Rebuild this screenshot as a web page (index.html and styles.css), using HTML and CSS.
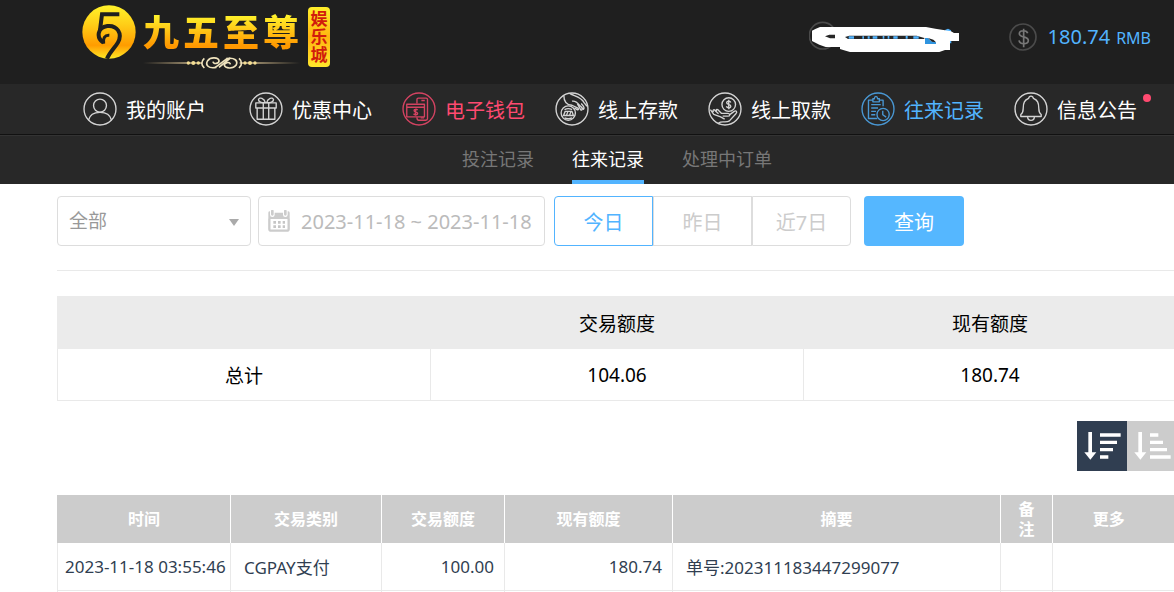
FILE: index.html
```
<!DOCTYPE html>
<html lang="zh-CN">

<head>
    <meta charset="UTF-8">
    <meta name="viewport" content="width=device-width, initial-scale=1.0">
    <title>往来记录</title>
    <link rel="stylesheet" href="styles.css">
</head>

<body>
    <header class="header">
        <a class="logo" href="#">
            <svg class="logo-mark" viewBox="0 0 162 162" aria-hidden="true">
                <defs>
                    <linearGradient id="gold" x1="0" y1="0" x2="0" y2="1">
                        <stop offset="0" stop-color="#fff22a" />
                        <stop offset="0.35" stop-color="#ffcf18" />
                        <stop offset="0.75" stop-color="#ff9c00" />
                        <stop offset="1" stop-color="#ffe926" />
                    </linearGradient>
                </defs>
                <circle cx="81" cy="81" r="80" fill="url(#gold)" />
                <path d="M112 28H60L54 76" fill="none" stroke="#1f1f1f" stroke-width="12" />
                <path d="M64 113C42 98 46 67 76 63C106 60 122 86 108 112C99 128 84 140 75 161" fill="none" stroke="#1f1f1f" stroke-width="12" />
                <path d="M65 116C62 100 68 90 82 91" fill="none" stroke="#1f1f1f" stroke-width="9" />
            </svg>
            <span class="logo-text">
                <span class="logo-name"><b>九</b><b>五</b><b>至</b><b>尊</b></span>
                <svg class="logo-line" viewBox="0 0 471 42" aria-hidden="true">
                    <defs>
                        <linearGradient id="fade">
                            <stop offset="0" stop-color="#b9a276" stop-opacity="0" />
                            <stop offset="0.3" stop-color="#c9b48a" />
                            <stop offset="0.7" stop-color="#c9b48a" />
                            <stop offset="1" stop-color="#b9a276" stop-opacity="0" />
                        </linearGradient>
                    </defs>
                    <path d="M0 19H178V23H0ZM290 19H471V23H290Z" fill="url(#fade)" />
                    <g fill="#f3dd94">
                        <circle cx="136" cy="21" r="5" /><circle cx="151" cy="21" r="6" /><circle cx="166" cy="21" r="5" />
                        <circle cx="306" cy="21" r="5" /><circle cx="321" cy="21" r="6" /><circle cx="336" cy="21" r="5" />
                    </g>
                    <g fill="none" stroke="#efe3bd" stroke-width="5">
                        <path d="M184 7C174 16 174 27 184 36M288 7C298 16 298 27 288 36" />
                        <path d="M220 34C196 39 186 27 194 14C203 2 226 4 228 14C229 23 211 26 210 17" />
                        <path d="M250 8C276 3 286 15 279 28C269 40 247 37 244 28C243 19 261 16 262 25" />
                        <path d="M217 34L252 8M228 34L262 6" />
                    </g>
                </svg>
            </span>
            <span class="logo-tag">娱乐城</span>
        </a>

        <div class="user-info">
            <svg class="account" viewBox="57 66 453 96" role="img" aria-label="账号">
                <circle cx="98" cy="110" r="40" fill="none" stroke="#4b4b4b" stroke-width="5" />
                <path d="M465 93L474 89L483 94L484 133H478Z" fill="#52b4ff" />
                <path d="M66 95L76 90L90 84H408L436 89L460 93L483 97L492 102H507V126H480V153H465L448 159H180L162 154L150 150V144H107L88 137L66 126Z" fill="#fff" />
                <path d="M105 112L118 107H135V118H120ZM165 114L178 110H380L403 117V120H174Z" fill="#262626" />
                <path d="M176 112H192V119H176ZM217 112H222V119H217ZM233 112H239V119H233ZM248 112H262V119H248ZM278 111H283V119H278ZM293 111H298V119H293ZM310 112H323V119H310ZM347 111H353V119H347ZM370 112H386V119H370Z" fill="#52b4ff" />
                <path d="M405 117H414L424 127L438 130V135H405Z" fill="#2f94df" />
                <path d="M414 117L430 122L438 130L426 128Z" fill="#222" />
            </svg>
            <div class="balance">
                <svg class="coin" viewBox="0 0 84 84" aria-hidden="true">
                    <g fill="none" stroke="#5a5a5a" stroke-width="5">
                        <circle cx="42" cy="42" r="39" stroke="#4b4b4b" />
                        <path d="M56 31C53 20 31 21 31 32C31 45 58 38 58 53C58 65 32 65 30 52M44 17V73" stroke="#777" />
                    </g>
                </svg>
                <span class="amount">180.74</span>
                <span class="currency">RMB</span>
            </div>
        </div>
    </header>

    <nav class="nav">
        <a class="nav-item" href="#">
            <svg class="nav-icon" viewBox="0 0 100 100" aria-hidden="true">
                <circle cx="50" cy="50" r="47" />
                <circle cx="50" cy="40" r="19" />
                <path d="M16 83C20 67 34 60 50 60S80 67 84 83" />
            </svg>
            我的账户
        </a>
        <a class="nav-item" href="#">
            <svg class="nav-icon" viewBox="0 0 100 100" aria-hidden="true">
                <circle cx="50" cy="50" r="47" />
                <path d="M20 32H80V47H20ZM24 47V80H76V47M42 32V80M58 32V80" />
                <path d="M48 31C38 32 27 29 28 22C31 14 45 18 48 31ZM52 31C62 32 73 29 72 22C69 14 55 18 52 31Z" />
            </svg>
            优惠中心
        </a>
        <a class="nav-item wallet" href="#">
            <svg class="nav-icon" viewBox="0 0 100 100" aria-hidden="true">
                <circle cx="50" cy="50" r="47" />
                <path d="M44 34V22Q44 18 48 18H71Q75 18 75 22V78Q75 83 70 83H49Q44 83 44 74M57 25H67M55 76H65" />
                <path d="M14 36H66V73H14ZM14 45H66" />
                <path d="M46 53C42 49 34 51 36 56C37 60 46 58 46 63C46 69 37 68 34 64M40 49V70" />
            </svg>
            电子钱包
        </a>
        <a class="nav-item" href="#">
            <svg class="nav-icon" viewBox="0 0 100 100" aria-hidden="true">
                <circle cx="50" cy="50" r="47" />
                <path d="M26 10C26 28 36 38 50 39L66 47C72 50 69 54 64 51L57 47M50 27C60 25 66 31 72 39L84 51C88 47 83 40 77 34M66 35L76 53C81 54 81 49 77 43M44 5C59 13 77 14 86 32L94 42" />
                <circle cx="39" cy="62" r="21" />
                <path d="M28 52Q39 46 50 52M28 76Q39 81 50 76M25 69L30 57H50L54 69ZM34 68L38 57M43 68L47 57" />
            </svg>
            线上存款
        </a>
        <a class="nav-item" href="#">
            <svg class="nav-icon" viewBox="0 0 100 100" aria-hidden="true">
                <circle cx="50" cy="50" r="47" />
                <circle cx="61" cy="37" r="20" />
                <path d="M67 31C65 25 54 26 55 32C56 38 67 35 67 42C67 49 56 48 54 42M61 23V51" />
                <path d="M7 52L17 66L37 73L49 80M16 59C12 52 19 50 22 56L31 64M25 57C22 50 29 50 32 55L40 63H59C67 65 65 71 58 71H43M62 68L77 57C83 53 87 59 82 64L63 85C53 92 41 84 31 91" />
            </svg>
            线上取款
        </a>
        <a class="nav-item active" href="#">
            <svg class="nav-icon" viewBox="0 0 100 100" aria-hidden="true">
                <circle cx="50" cy="50" r="47" />
                <path d="M35 24H22V78H48M53 24H65V42M35 20H39Q40 13 44 13T49 20H54V29H35ZM30 37H58M30 47H50M30 57H44M30 67H42" />
                <circle cx="65" cy="66" r="18" />
                <path d="M64 55V67L74 74" />
            </svg>
            往来记录
        </a>
        <a class="nav-item" href="#">
            <svg class="nav-icon" viewBox="0 0 100 100" aria-hidden="true">
                <circle cx="50" cy="50" r="47" />
                <path d="M20 72V66Q27 61 27 49C27 31 31 24 43 19Q44 12 50 12T57 19C69 24 73 31 73 49Q73 61 80 66V72ZM40 72C40 87 60 87 60 72" />
            </svg>
            信息公告
            <span class="dot"></span>
        </a>
    </nav>

    <div class="subnav">
        <a class="subnav-item" href="#">投注记录</a>
        <a class="subnav-item current" href="#">往来记录</a>
        <a class="subnav-item" href="#">处理中订单</a>
    </div>

    <main class="content">
        <form class="filters">
            <div class="select-box">
                <select id="type" name="type" aria-label="交易类别">
                    <option>全部</option>
                </select>
            </div>
            <label class="date-box" for="date">
                <svg class="calendar" viewBox="0 0 66 66" aria-label="日期">
                    <path d="M1 8Q1 4 6 4V14Q6 21 13 21T20 14V8H45V14Q45 21 52 21T59 14V4Q65 4 65 8V27H1Z" fill="#ccc" />
                    <path d="M13 3V13M52 3V13" stroke="#ccc" stroke-width="8" stroke-linecap="round" />
                    <path d="M4 26V57Q4 62 9 62H57Q62 62 62 57V26" fill="none" stroke="#ccc" stroke-width="7" />
                    <path d="M16 37H51M16 50H51" stroke="#c6c6c6" stroke-width="8" stroke-dasharray="8 6" />
                </svg>
                <input type="text" id="date" name="date" value="2023-11-18 ~ 2023-11-18">
            </label>
            <div class="day-group">
                <button type="button" class="day selected">今日</button>
                <button type="button" class="day">昨日</button>
                <button type="button" class="day">近7日</button>
            </div>
            <button type="submit" class="search">查询</button>
        </form>

        <table class="summary">
            <thead>
                <tr>
                    <th></th>
                    <th>交易额度</th>
                    <th>现有额度</th>
                </tr>
            </thead>
            <tbody>
                <tr>
                    <td>总计</td>
                    <td>104.06</td>
                    <td>180.74</td>
                </tr>
            </tbody>
        </table>

        <div class="sort">
            <button type="button" class="sort-btn on" aria-label="降序">
                <svg viewBox="0 0 150 150" aria-hidden="true">
                    <path d="M34 33H45V94H58L40 116L22 94H34ZM69 37H131V47H69ZM69 59H120V69H69ZM69 81H108V91H69ZM69 103H94V113H69Z" />
                </svg>
            </button>
            <button type="button" class="sort-btn" aria-label="升序">
                <svg viewBox="0 0 150 150" aria-hidden="true">
                    <path d="M34 33H45V94H58L40 116L22 94H34ZM69 37H94V47H69ZM69 59H108V69H69ZM69 81H120V91H69ZM69 103H131V113H69Z" />
                </svg>
            </button>
        </div>

        <table class="records">
            <colgroup>
                <col class="col-time">
                <col class="col-type">
                <col class="col-amount">
                <col class="col-balance">
                <col class="col-summary">
                <col class="col-note">
                <col class="col-more">
            </colgroup>
            <thead>
                <tr>
                    <th>时间</th>
                    <th>交易类别</th>
                    <th>交易额度</th>
                    <th>现有额度</th>
                    <th>摘要</th>
                    <th>备注</th>
                    <th>更多</th>
                </tr>
            </thead>
            <tbody>
                <tr>
                    <td class="time">2023-11-18 03:55:46</td>
                    <td>CGPAY支付</td>
                    <td class="num">100.00</td>
                    <td class="num">180.74</td>
                    <td>单号:202311183447299077</td>
                    <td></td>
                    <td></td>
                </tr>
                <tr>
                    <td></td>
                    <td></td>
                    <td></td>
                    <td></td>
                    <td></td>
                    <td></td>
                    <td></td>
                </tr>
            </tbody>
        </table>
    </main>
</body>

</html>
```
FILE: styles.css
```
* {
    box-sizing: border-box;
}

body {
    margin: 0;
    height: 100vh;
    overflow: hidden;
    background-color: #fff;
    color: #000;
    font-family: "Noto Sans", "Noto Sans CJK SC", sans-serif;
}

a {
    text-decoration: none;
}

button,
input,
select {
    font-family: inherit;
}

svg {
    display: block;
    flex: none;
}

/* header */
.header {
    display: flex;
    justify-content: space-between;
    align-items: flex-start;
    height: 84px;
    padding: 5px 23px 0 82px;
    background-color: #1f1f1f;
}

.logo {
    display: flex;
    align-items: flex-start;
}

.logo-mark {
    width: 54px;
    height: 54px;
}

.logo-text {
    display: flex;
    flex-direction: column;
    width: 157px;
    margin: 0 8px 0 7px;
}

.logo-name {
    display: flex;
    gap: 4px;
    height: 51px;
    font-family: "Noto Sans CJK SC", sans-serif;
    font-size: 36px;
    line-height: 51px;
}

.logo-name b {
    font-weight: 900;
    background: linear-gradient(#fff32c 20%, #ff9800 80%);
    -webkit-background-clip: text;
    background-clip: text;
    color: transparent;
}

.logo-line {
    width: 157px;
    height: 14px;
}

.logo-tag {
    width: 22px;
    height: 60px;
    margin-top: 2px;
    padding-top: 2px;
    border-radius: 4px;
    background: linear-gradient(#ffef2b, #ffb410 50%, #ffe72c);
    color: #d11c0c;
    font-family: "Noto Sans CJK SC", sans-serif;
    font-size: 17px;
    font-weight: bold;
    line-height: 18px;
    text-align: center;
}

.user-info {
    display: flex;
    align-items: center;
    gap: 49px;
    height: 64px;
}

.account {
    width: 151px;
    height: 32px;
}

.balance {
    display: flex;
    align-items: baseline;
    color: #52b4ff;
}

.coin {
    align-self: center;
    width: 28px;
    height: 28px;
    margin-right: 11px;
}

.amount {
    font-size: 20px;
}

.currency {
    margin-left: 6px;
    font-size: 16px;
}

/* navigation */
.nav {
    display: flex;
    gap: 30px;
    align-items: center;
    height: 51px;
    padding-left: 83px;
    background-color: #282828;
    border-bottom: 1px solid #111;
}

.nav-item {
    position: relative;
    display: flex;
    align-items: center;
    gap: 9px;
    color: #fff;
    font-size: 20px;
    white-space: nowrap;
}

.nav-item:first-child {
    margin-right: 13px;
}

.nav-icon {
    width: 34px;
    height: 34px;
    fill: none;
    stroke: currentColor;
    stroke-width: 4;
    stroke-linejoin: round;
    opacity: 0.8;
}

.wallet {
    color: #ff4a70;
}

.active {
    color: #52b4ff;
}

.dot {
    position: absolute;
    top: 2px;
    right: -14px;
    width: 8px;
    height: 8px;
    border-radius: 50%;
    background-color: #ff4a70;
}

.subnav {
    display: flex;
    justify-content: center;
    gap: 38px;
    height: 49px;
    padding-left: 60px;
    background-color: #282828;
    border-top: 1px solid #333;
}

.subnav-item {
    height: 48px;
    color: #777;
    font-size: 18px;
    line-height: 46px;
}

.current {
    color: #fff;
    border-bottom: 4px solid #52b4ff;
}

/* content, runs a little past the right edge */
.content {
    margin: 0 -3px 0 57px;
}

.filters {
    display: flex;
    height: 87px;
    padding-top: 12px;
    border-bottom: 1px solid #e9e9e9;
}

.select-box {
    position: relative;
    width: 194px;
    height: 50px;
    margin-right: 7px;
}

.select-box::after {
    content: "";
    position: absolute;
    top: 23px;
    right: 12px;
    border: 5px solid transparent;
    border-top: 7px solid #aaa;
    border-bottom: 0;
    pointer-events: none;
}

.select-box select {
    appearance: none;
    width: 100%;
    height: 100%;
    padding: 0 11px;
    border: 1px solid #ddd;
    border-radius: 4px;
    background-color: #fff;
    color: #999;
    font-size: 19px;
}

.date-box {
    display: flex;
    align-items: center;
    width: 287px;
    height: 50px;
    margin-right: 9px;
    padding-left: 9px;
    border: 1px solid #ddd;
    border-radius: 4px;
}

.calendar {
    width: 22px;
    height: 22px;
    margin-right: 11px;
}

.date-box input {
    flex: 1;
    min-width: 0;
    padding: 0;
    border: 0;
    background: none;
    color: #bbb;
    font-size: 20px;
}

.day-group {
    display: flex;
    margin-right: 13px;
}

.day {
    width: 99px;
    height: 50px;
    padding: 0;
    border: 1px solid #ddd;
    background-color: #fff;
    color: #ccc;
    font-size: 20px;
}

.day:last-child {
    border-radius: 0 4px 4px 0;
}

.day.selected {
    border-color: #52b4ff;
    border-radius: 4px 0 0 4px;
    color: #52b4ff;
}

.search {
    width: 100px;
    height: 50px;
    border: 0;
    border-radius: 4px;
    background-color: #55b7ff;
    color: #fff;
    font-size: 20px;
}

table {
    width: 100%;
    border-collapse: collapse;
    table-layout: fixed;
}

.summary {
    margin-top: 25px;
    font-size: 19px;
    text-align: center;
}

.summary th {
    height: 52px;
    padding: 0;
    border: 1px solid #ebebeb;
    background-color: #ebebeb;
    font-weight: normal;
}

.summary td {
    height: 52px;
    padding: 0;
    border: 1px solid #e9e9e9;
}

.sort {
    display: flex;
    justify-content: flex-end;
    margin: 20px 0 24px;
}

.sort-btn {
    width: 50px;
    height: 50px;
    padding: 0;
    border: 0;
    background-color: #ccc;
    fill: #fff;
}

.sort-btn.on {
    background-color: #303e51;
}

/* records */
.col-time {
    width: 173px;
}

.col-type {
    width: 151px;
}

.col-amount {
    width: 123px;
}

.col-balance {
    width: 168px;
}

.col-note {
    width: 52px;
}

.col-more {
    width: 124px;
}

.records th {
    height: 48px;
    padding: 0 12px;
    border-left: 1px solid #fff;
    background-color: #ccc;
    color: #fff;
    font-size: 16px;
    line-height: 20px;
}

.records th:first-child {
    border-left-color: #ccc;
}

.records th:last-child {
    padding-right: 24px;
}

.records td {
    height: 47px;
    padding: 0 10px 0 13px;
    border: 1px solid #e9e9e9;
    border-top: 0;
    color: #303e51;
    font-size: 17px;
    white-space: nowrap;
}

.records .time {
    padding: 0 4px 0 7px;
}

.records .num {
    text-align: right;
}
```
